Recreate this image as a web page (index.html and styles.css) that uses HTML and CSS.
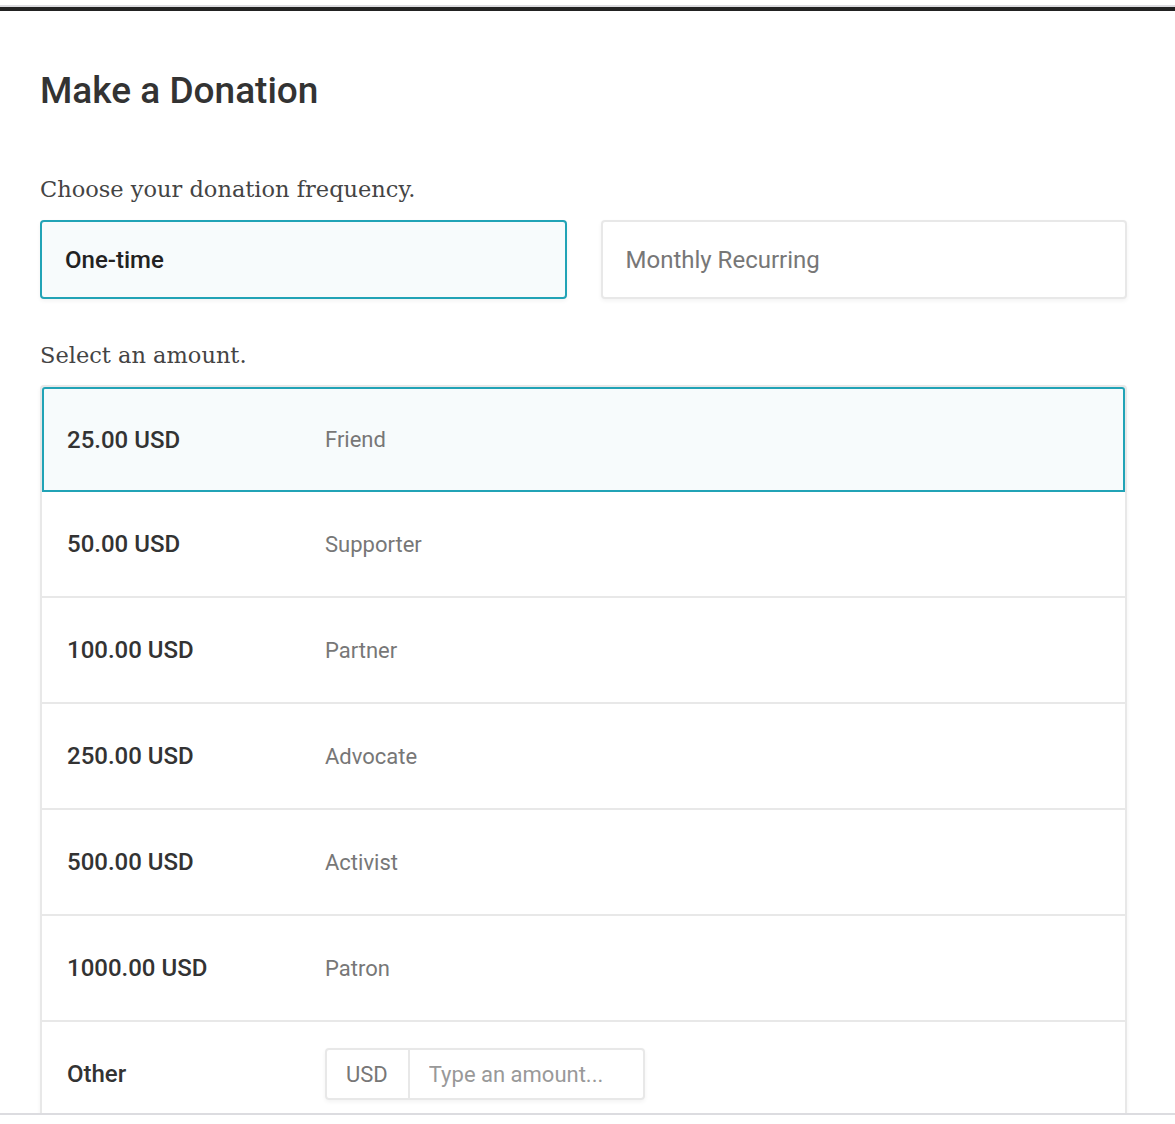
FILE: index.html
```html
<!DOCTYPE html>
<html lang="en">
  <head>
    <meta charset="UTF-8" />
    <meta name="viewport" content="width=device-width, initial-scale=1.0" />
    <title>Make a Donation</title>
    <link rel="stylesheet" href="styles.css">
  </head>
  <body>
    <div class="top-rule"></div>
    <div class="panel">
      <h1 class="title">Make a Donation</h1>

      <p class="prompt">Choose your donation frequency.</p>
      <div class="frequency">
        <button type="button" class="freq-button selected">One-time</button>
        <button type="button" class="freq-button">Monthly Recurring</button>
      </div>

      <p class="prompt prompt-amount">Select an amount.</p>
      <div class="amount-list">
        <div class="amount-row selected">
          <span class="amount">25.00 USD</span>
          <span class="level">Friend</span>
        </div>
        <div class="amount-row">
          <span class="amount">50.00 USD</span>
          <span class="level">Supporter</span>
        </div>
        <div class="amount-row">
          <span class="amount">100.00 USD</span>
          <span class="level">Partner</span>
        </div>
        <div class="amount-row">
          <span class="amount">250.00 USD</span>
          <span class="level">Advocate</span>
        </div>
        <div class="amount-row">
          <span class="amount">500.00 USD</span>
          <span class="level">Activist</span>
        </div>
        <div class="amount-row">
          <span class="amount">1000.00 USD</span>
          <span class="level">Patron</span>
        </div>
        <div class="amount-row">
          <span class="amount">Other</span>
          <div class="other-input">
            <span class="currency">USD</span>
            <input type="text" placeholder="Type an amount..." />
          </div>
        </div>
      </div>
    </div>
  </body>
</html>
```

FILE: styles.css
```css
body {
  margin: 0;
  font-family: Roboto, "Liberation Sans", sans-serif;
  background-color: white;
  color: #333;
}

.top-rule {
  margin-top: 5px;
  border-top: 2px solid #dcdce0;
  border-bottom: 4px solid #222;
}

.panel {
  height: 1102px;
  overflow: hidden;
  border-bottom: 2px solid #dcdce0;
  padding: 0 48px 0 40px;
}

.title {
  margin: 58px 0 0 0;
  font-size: 37px;
  font-weight: 500;
  line-height: 44px;
  color: #333;
}

.prompt {
  margin: 60px 0 0 0;
  font-family: "DejaVu Serif", "Liberation Serif", serif;
  font-size: 22.5px;
  line-height: 32px;
  color: #444;
}

.prompt-amount {
  margin-top: 40px;
}

.frequency {
  display: flex;
  gap: 34px;
  margin-top: 15px;
}

.freq-button {
  flex: 1;
  height: 79px;
  text-align: left;
  padding: 0 0 0 23px;
  font-family: Roboto, "Liberation Sans", sans-serif;
  font-size: 24px;
  color: #777;
  background-color: white;
  border: 2px solid #e8e8e8;
  border-radius: 4px;
  box-shadow: 0 2px 4px rgba(0, 0, 0, 0.05);
}

.freq-button.selected {
  color: #222;
  font-weight: 500;
  background-color: #f7fbfc;
  border-color: #21a3b6;
}

.amount-list {
  margin-top: 14px;
  border: 2px solid #e8e8e8;
  border-bottom: none;
  border-radius: 4px 4px 0 0;
  box-shadow: 0 2px 4px rgba(0, 0, 0, 0.05);
}

.amount-row {
  display: flex;
  align-items: center;
  height: 104px;
  border-bottom: 2px solid #e8e8e8;
}

.amount-row.selected {
  height: 101px;
  border: 2px solid #21a3b6;
  border-radius: 3px 3px 0 0;
  background-color: #f7fbfc;
}

.amount-row.selected .amount {
  padding-left: 23px;
}

.amount {
  width: 258px;
  padding-left: 25px;
  font-size: 24px;
  font-weight: 500;
  color: #333;
}

.level {
  font-size: 22px;
  color: #777;
}

.other-input {
  display: flex;
  box-sizing: border-box;
  height: 52px;
  border: 2px solid #e8e8e8;
  border-radius: 4px;
  box-shadow: 0 2px 4px rgba(0, 0, 0, 0.05);
}

.currency {
  display: flex;
  align-items: center;
  padding: 0 20px 0 19px;
  font-size: 22px;
  color: #777;
  border-right: 2px solid #e8e8e8;
}

.other-input input {
  width: 214px;
  border: none;
  padding: 0 0 0 19px;
  font-family: Roboto, "Liberation Sans", sans-serif;
  font-size: 22px;
  color: #333;
  background: transparent;
}

.other-input input::placeholder {
  color: #999;
}
```
